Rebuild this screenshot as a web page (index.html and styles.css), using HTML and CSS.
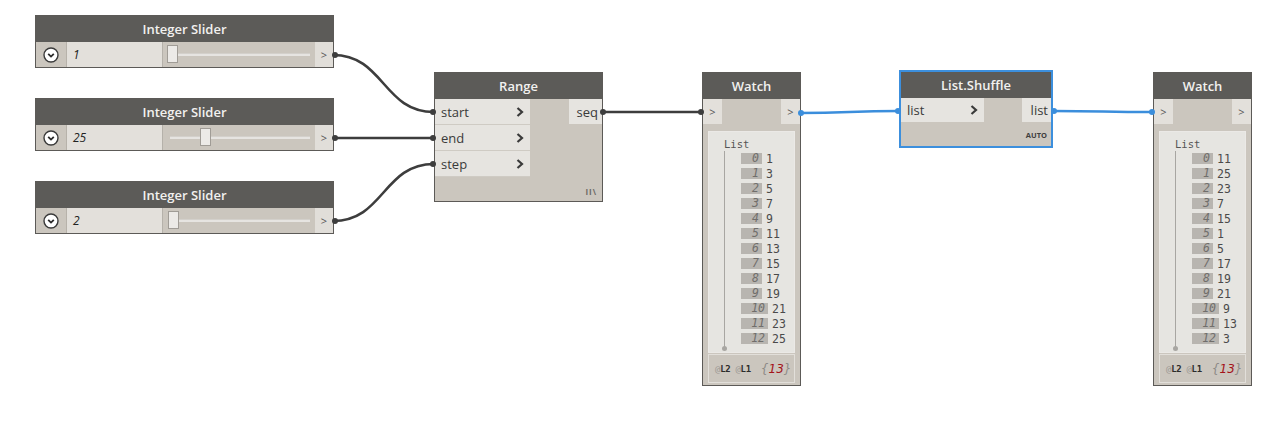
FILE: index.html
```html
<!DOCTYPE html>
<html>
<head>
<meta charset="utf-8">
<link rel="stylesheet" href="styles.css">
</head>
<body>
<div class="canvas">
  <svg class="wires" width="1286" height="426" viewBox="0 0 1286 426">
    <g fill="none" stroke="#3d3d3d" stroke-width="2.6">
      <path d="M333,55 C384,55 383,112 434,112"/>
      <path d="M333,138 L434,138"/>
      <path d="M333,221 C384,221 383,164 434,164"/>
      <path d="M602,112 L702,112"/>
    </g>
    <g fill="none" stroke="#3b8edc" stroke-width="2.6">
      <path d="M800,113 C850,113 849,111 899,111"/>
      <path d="M1053,111 C1103,111 1103,112 1153,112"/>
    </g>
    <g fill="#3d3d3d">
      <circle cx="335" cy="55" r="3"/>
      <circle cx="335" cy="138" r="3"/>
      <circle cx="335" cy="221" r="3"/>
      <circle cx="433" cy="112" r="3"/>
      <circle cx="433" cy="138" r="3"/>
      <circle cx="433" cy="164" r="3"/>
      <circle cx="603" cy="112" r="3"/>
      <circle cx="701" cy="112" r="3"/>
    </g>
    <g fill="#3b8edc">
      <circle cx="801" cy="113" r="3"/>
      <circle cx="898" cy="111" r="3"/>
      <circle cx="1054" cy="111" r="3"/>
      <circle cx="1152" cy="112" r="3"/>
    </g>
  </svg>

  <div class="node slider pos-s1">
    <div class="hdr">Integer Slider</div>
    <div class="srow">
      <div class="drop"><svg width="16" height="16" viewBox="0 0 16 16"><circle cx="8" cy="8" r="7" fill="#fff" stroke="#3a3a3a" stroke-width="1.4"/><path d="M5.2,6.8 L8,9.6 L10.8,6.8" fill="none" stroke="#2a2a2a" stroke-width="1.8"/></svg></div>
      <div class="val">1</div>
      <div class="track"><div class="rail"></div><div class="thumb th1"></div></div>
      <div class="oport">&gt;</div>
    </div>
  </div>

  <div class="node slider pos-s2">
    <div class="hdr">Integer Slider</div>
    <div class="srow">
      <div class="drop"><svg width="16" height="16" viewBox="0 0 16 16"><circle cx="8" cy="8" r="7" fill="#fff" stroke="#3a3a3a" stroke-width="1.4"/><path d="M5.2,6.8 L8,9.6 L10.8,6.8" fill="none" stroke="#2a2a2a" stroke-width="1.8"/></svg></div>
      <div class="val">25</div>
      <div class="track"><div class="rail rail2"></div><div class="thumb th2"></div></div>
      <div class="oport">&gt;</div>
    </div>
  </div>

  <div class="node slider pos-s3">
    <div class="hdr">Integer Slider</div>
    <div class="srow">
      <div class="drop"><svg width="16" height="16" viewBox="0 0 16 16"><circle cx="8" cy="8" r="7" fill="#fff" stroke="#3a3a3a" stroke-width="1.4"/><path d="M5.2,6.8 L8,9.6 L10.8,6.8" fill="none" stroke="#2a2a2a" stroke-width="1.8"/></svg></div>
      <div class="val">2</div>
      <div class="track"><div class="rail"></div><div class="thumb th3"></div></div>
      <div class="oport">&gt;</div>
    </div>
  </div>

  <div class="node range pos-range">
    <div class="hdr">Range</div>
    <div class="rbody">
      <div class="inputs">
        <div class="iport"><span>start</span><svg class="chev" width="8" height="10" viewBox="0 0 8 10"><path d="M1.5,1 L6,5 L1.5,9" fill="none" stroke="#3a3a3a" stroke-width="2.2"/></svg></div>
        <div class="iport"><span>end</span><svg class="chev" width="8" height="10" viewBox="0 0 8 10"><path d="M1.5,1 L6,5 L1.5,9" fill="none" stroke="#3a3a3a" stroke-width="2.2"/></svg></div>
        <div class="iport"><span>step</span><svg class="chev" width="8" height="10" viewBox="0 0 8 10"><path d="M1.5,1 L6,5 L1.5,9" fill="none" stroke="#3a3a3a" stroke-width="2.2"/></svg></div>
      </div>
      <div class="outputs">
        <div class="oport-r">seq</div>
        <div class="lacing">II\</div>
      </div>
    </div>
  </div>

  <div class="node watch pos-w1">
    <div class="hdr">Watch</div>
    <div class="wports"><div class="wp">&gt;</div><div class="wp">&gt;</div></div>
    <div class="wlist">
      <div class="ltitle">List</div>
      <div class="tree">
        <div class="item"><span class="idx">0</span><span class="v">1</span></div>
        <div class="item"><span class="idx">1</span><span class="v">3</span></div>
        <div class="item"><span class="idx">2</span><span class="v">5</span></div>
        <div class="item"><span class="idx">3</span><span class="v">7</span></div>
        <div class="item"><span class="idx">4</span><span class="v">9</span></div>
        <div class="item"><span class="idx">5</span><span class="v">11</span></div>
        <div class="item"><span class="idx">6</span><span class="v">13</span></div>
        <div class="item"><span class="idx">7</span><span class="v">15</span></div>
        <div class="item"><span class="idx">8</span><span class="v">17</span></div>
        <div class="item"><span class="idx">9</span><span class="v">19</span></div>
        <div class="item"><span class="idx wide">10</span><span class="v">21</span></div>
        <div class="item"><span class="idx wide">11</span><span class="v">23</span></div>
        <div class="item"><span class="idx wide">12</span><span class="v">25</span></div>
      </div>
    </div>
    <div class="wfoot"><span class="lv"><span class="at">@</span>L2 <span class="at">@</span>L1</span><span class="cnt"><span class="br">{</span>13<span class="br">}</span></span></div>
  </div>

  <div class="node shuffle pos-sh">
    <div class="hdr">List.Shuffle</div>
    <div class="shrow">
      <div class="iport sh-in"><span>list</span><svg class="chev" width="8" height="10" viewBox="0 0 8 10"><path d="M1.5,1 L6,5 L1.5,9" fill="none" stroke="#3a3a3a" stroke-width="2.2"/></svg></div>
      <div class="oport-r sh-out">list</div>
    </div>
    <div class="auto">AUTO</div>
  </div>

  <div class="node watch pos-w2">
    <div class="hdr">Watch</div>
    <div class="wports"><div class="wp">&gt;</div><div class="wp">&gt;</div></div>
    <div class="wlist">
      <div class="ltitle">List</div>
      <div class="tree">
        <div class="item"><span class="idx">0</span><span class="v">11</span></div>
        <div class="item"><span class="idx">1</span><span class="v">25</span></div>
        <div class="item"><span class="idx">2</span><span class="v">23</span></div>
        <div class="item"><span class="idx">3</span><span class="v">7</span></div>
        <div class="item"><span class="idx">4</span><span class="v">15</span></div>
        <div class="item"><span class="idx">5</span><span class="v">1</span></div>
        <div class="item"><span class="idx">6</span><span class="v">5</span></div>
        <div class="item"><span class="idx">7</span><span class="v">17</span></div>
        <div class="item"><span class="idx">8</span><span class="v">19</span></div>
        <div class="item"><span class="idx">9</span><span class="v">21</span></div>
        <div class="item"><span class="idx wide">10</span><span class="v">9</span></div>
        <div class="item"><span class="idx wide">11</span><span class="v">13</span></div>
        <div class="item"><span class="idx wide">12</span><span class="v">3</span></div>
      </div>
    </div>
    <div class="wfoot"><span class="lv"><span class="at">@</span>L2 <span class="at">@</span>L1</span><span class="cnt"><span class="br">{</span>13<span class="br">}</span></span></div>
  </div>
</div>
</body>
</html>
```

FILE: styles.css
```css
* { box-sizing: border-box; }
html, body {
  margin: 0;
  padding: 0;
  background: #ffffff;
}
.canvas {
  position: relative;
  width: 1286px;
  height: 426px;
  overflow: hidden;
  font-family: "Open Sans", "Liberation Sans", sans-serif;
  color: #3a3a3a;
}
.wires {
  position: absolute;
  left: 0;
  top: 0;
  z-index: 2;
  pointer-events: none;
}
.node {
  position: absolute;
  z-index: 1;
  background: #cbc6be;
  border: 1px solid #5c5a57;
  display: flex;
  flex-direction: column;
}
.hdr {
  height: 26px;
  background: #5c5b58;
  color: #f2f1ef;
  font-size: 13px;
  font-weight: 600;
  display: flex;
  align-items: center;
  justify-content: center;
  flex: none;
}

/* positions on the canvas */
.pos-s1 { left: 35px; top: 15px; }
.pos-s2 { left: 35px; top: 98px; }
.pos-s3 { left: 35px; top: 181px; }
.pos-range { left: 434px; top: 72px; }
.pos-w1 { left: 702px; top: 72px; }
.pos-sh { left: 899px; top: 70px; }
.pos-w2 { left: 1153px; top: 72px; }

/* slider */
.slider { width: 299px; height: 53px; }
.srow {
  display: flex;
  height: 25px;
}
.drop {
  width: 31px;
  display: flex;
  align-items: center;
  justify-content: center;
  border-right: 1px solid #b7b2aa;
}
.val {
  width: 96px;
  background: #e3e0db;
  border-right: 1px solid #b5b1aa;
  font-size: 12px;
  font-style: italic;
  color: #222;
  display: flex;
  align-items: center;
  padding-left: 6px;
}
.track {
  position: relative;
  width: 152px;
  display: flex;
  align-items: center;
}
.rail {
  margin-left: 7px;
  width: 140px;
  height: 3px;
  background: #e6e4e1;
  border-top: 1px solid #d3d0cb;
}
.thumb {
  position: absolute;
  top: 3px;
  width: 11px;
  height: 18px;
  background: #eceae7;
  border: 1px solid #a09c96;
}
.th1 { left: 4px; }
.th2 { left: 37px; }
.th3 { left: 5px; }
.oport {
  flex: 1;
  background: #e1ded9;
  font-size: 11px;
  color: #555;
  display: flex;
  align-items: center;
  justify-content: center;
}

/* range */
.range { width: 169px; height: 130px; }
.rbody { display: flex; flex: 1; }
.inputs {
  width: 95px;
  display: flex;
  flex-direction: column;
}
.iport {
  height: 26px;
  background: #e6e4e0;
  border-bottom: 1px solid #cfcbc4;
  display: flex;
  align-items: center;
  justify-content: space-between;
  padding: 0 6px 0 6px;
  font-size: 13px;
  color: #3a3a3a;
}
.outputs {
  flex: 1;
  display: flex;
  flex-direction: column;
  align-items: flex-end;
}
.oport-r {
  height: 25px;
  width: 33px;
  background: #e6e4e0;
  display: flex;
  align-items: center;
  justify-content: flex-end;
  padding-right: 4px;
  font-size: 13px;
  color: #3a3a3a;
}
.lacing {
  margin-top: auto;
  margin-bottom: 4px;
  margin-right: 5px;
  font-size: 8px;
  font-weight: 700;
  color: #6c6a66;
  letter-spacing: 1px;
}

/* watch */
.watch { width: 99px; height: 314px; }
.wports {
  display: flex;
  justify-content: space-between;
  height: 25px;
  flex: none;
}
.wp {
  width: 19px;
  background: #e3e0db;
  font-size: 11px;
  color: #555;
  display: flex;
  align-items: center;
  justify-content: center;
}
.wlist {
  margin: 7px 5px 0 5px;
  height: 222px;
  background: #e6e5e1;
  border: 1px solid #ebe9e6;
  padding: 5px 0 0 15px;
  font-family: "DejaVu Sans Mono", "Liberation Mono", monospace;
  font-size: 10.5px;
  color: #555;
}
.ltitle {
  line-height: 14px;
  height: 14px;
}
.tree {
  position: relative;
  margin-top: 0;
  border-left: 1px solid #a8a6a2;
  padding-left: 16px;
  padding-bottom: 3px;
  width: 70px;
}
.tree::after {
  content: "";
  position: absolute;
  left: -3px;
  bottom: -2px;
  width: 5px;
  height: 5px;
  border-radius: 50%;
  background: #a8a6a2;
}
.item {
  height: 15px;
  display: flex;
  align-items: center;
}
.idx {
  width: 21px;
  height: 11px;
  background: #b8b5b0;
  color: #706e6b;
  font-style: italic;
  font-size: 11.5px;
  line-height: 11px;
  text-align: right;
  padding-right: 3px;
}
.idx.wide { width: 27px; }
.v {
  margin-left: 4px;
  font-size: 11.5px;
  color: #4a4a4a;
}
.wfoot {
  margin: 1px 5px 0 5px;
  height: 29px;
  border: 1px solid #e2dfda;
  display: flex;
  align-items: center;
  padding-left: 6px;
  gap: 10px;
}
.lv {
  font-family: "DejaVu Sans Mono", "Liberation Mono", monospace;
  font-size: 9px;
  font-weight: 700;
  color: #2c2c2c;
  letter-spacing: -0.3px;
}
.at { color: #9c9994; font-weight: 400; }
.cnt {
  font-family: "DejaVu Sans", sans-serif;
  font-style: italic;
  font-size: 12px;
  color: #a4141a;
}
.br { color: #8d8a86; }

/* shuffle */
.shuffle {
  width: 154px;
  height: 78px;
  border: 2px solid #3c8fdd;
}
.shuffle .hdr { height: 26px; }
.shrow {
  display: flex;
  justify-content: space-between;
  height: 24px;
}
.sh-in {
  width: 83px;
  height: 24px;
  border-bottom: none;
}
.sh-out {
  width: 29px;
  height: 24px;
  padding-right: 3px;
}
.auto {
  margin-top: auto;
  align-self: flex-end;
  margin-right: 4px;
  margin-bottom: 6px;
  font-size: 7.5px;
  font-weight: 700;
  color: #3f3f3f;
}
```
